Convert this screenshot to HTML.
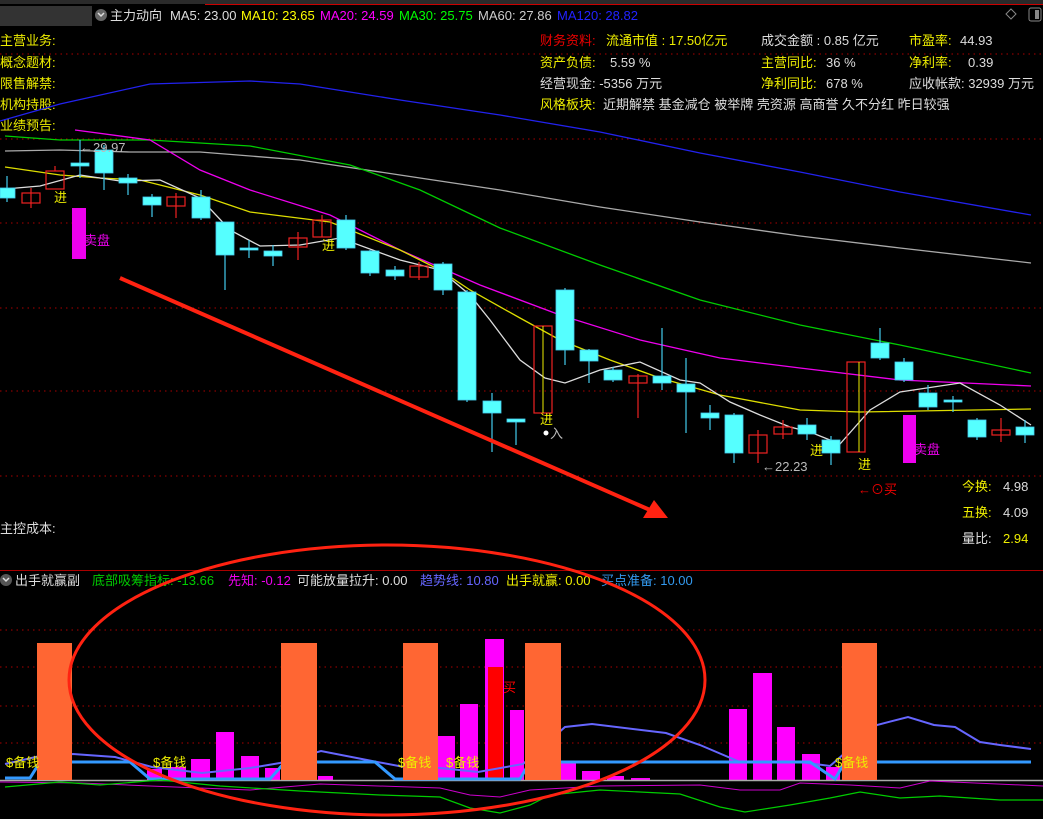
<!DOCTYPE html>
<html><head><meta charset="utf-8"><style>
body{margin:0;background:#000;width:1043px;height:819px;overflow:hidden;font-family:"Liberation Sans","Noto Sans CJK SC",sans-serif}
svg{position:absolute;left:0;top:0}
text{font-family:"Liberation Sans","Noto Sans CJK SC",sans-serif;font-size:13px}
</style></head><body>
<svg width="1043" height="819" viewBox="0 0 1043 819">
<rect width="1043" height="819" fill="#000"/>
<rect width="1043" height="4" fill="#2a2a2a"/>
<line x1="205" y1="4.5" x2="1043" y2="4.5" stroke="#c00" stroke-width="1"/>
<rect x="0" y="6" width="92" height="20" fill="#333"/>
<circle cx="101" cy="15" r="6" fill="#666"/>
<path d="M98 13l3 3 3-3" stroke="#ddd" fill="none" stroke-width="1.5"/>
<text x="110" y="20" fill="#ddd">主力动向</text>
<text x="170" y="20" fill="#ddd">MA5: 23.00</text>
<text x="241" y="20" fill="#ff0">MA10: 23.65</text>
<text x="320" y="20" fill="#f0f">MA20: 24.59</text>
<text x="399" y="20" fill="#0f0">MA30: 25.75</text>
<text x="478" y="20" fill="#ccc">MA60: 27.86</text>
<text x="557" y="20" fill="#22f">MA120: 28.82</text>
<path d="M1011 9l5 5-5 5-5-5z" stroke="#888" fill="none"/>
<rect x="1029" y="8" width="12" height="13" rx="2" stroke="#888" fill="none"/>
<rect x="1035" y="10" width="4" height="9" fill="#888"/>
<!-- grid -->
<g stroke="#a00" stroke-dasharray="1.5,4" stroke-width="1">
<line x1="0" y1="54" x2="1043" y2="54"/><line x1="0" y1="139" x2="1043" y2="139"/><line x1="0" y1="223" x2="1043" y2="223"/><line x1="0" y1="308" x2="1043" y2="308"/><line x1="0" y1="391" x2="1043" y2="391"/><line x1="0" y1="476" x2="1043" y2="476"/>
<line x1="0" y1="630" x2="1043" y2="630"/><line x1="0" y1="667" x2="1043" y2="667"/><line x1="0" y1="706" x2="1043" y2="706"/><line x1="0" y1="743" x2="1043" y2="743"/>
</g>
<!-- labels -->
<g fill="#ee0">
<text x="0" y="45">主营业务:</text><text x="0" y="67">概念题材:</text><text x="0" y="88">限售解禁:</text><text x="0" y="109">机构持股:</text><text x="0" y="130">业绩预告:</text>
<text x="0" y="533" fill="#ddd">主控成本:</text>
</g>
<text x="540" y="45" fill="#e00">财务资料:</text><text x="606" y="45" fill="#ee0">流通市值 : 17.50亿元</text>
<text x="761" y="45" fill="#ddd">成交金额 : 0.85  亿元</text>
<text x="909" y="45" fill="#ee0">市盈率:</text><text x="960" y="45" fill="#ddd">44.93</text>
<text x="540" y="67" fill="#ee0">资产负债:</text><text x="610" y="67" fill="#ddd">  5.59 %</text>
<text x="761" y="67" fill="#ee0">主营同比:</text><text x="826" y="67" fill="#ddd">36 %</text>
<text x="909" y="67" fill="#ee0">净利率:</text><text x="968" y="67" fill="#ddd">0.39</text>
<text x="540" y="88" fill="#ddd">经营现金: -5356 万元</text>
<text x="761" y="88" fill="#ee0">净利同比:</text><text x="826" y="88" fill="#ddd">678 %</text>
<text x="909" y="88" fill="#ddd">应收帐款: 32939 万元</text>
<text x="540" y="109" fill="#ee0">风格板块:</text><text x="603" y="109" fill="#ddd">近期解禁 基金减仓 被举牌 壳资源 高商誉 久不分红 昨日较强</text>
<text x="962" y="491" fill="#ee0">今换:</text><text x="1003" y="491" fill="#ddd">4.98</text>
<text x="962" y="517" fill="#ee0">五换:</text><text x="1003" y="517" fill="#ddd">4.09</text>
<text x="962" y="543" fill="#ddd">量比:</text><text x="1003" y="543" fill="#ee0">2.94</text>
<!-- MAs -->
<g fill="none" stroke-width="1.3">
<polyline stroke="#22e" points="0,121 60,104 150,84 250,81 300,84 400,100 500,115 600,132 700,153 800,172 900,192 1031,215"/>
<polyline stroke="#aaa" points="5,151 60,150 130,152 200,152 300,160 400,175 500,190 600,207 700,222 800,236 900,248 1031,263"/>
<polyline stroke="#0c0" points="5,136 60,140 150,140 250,146 350,165 420,190 500,228 600,265 700,300 800,325 900,345 1031,373"/>
<polyline stroke="#e0e" points="75,130 150,140 200,170 250,190 330,215 400,250 480,285 560,315 640,340 720,358 800,368 900,380 1031,386"/>
<polyline stroke="#dd0" points="5,167 60,175 100,178 140,180 200,195 250,212 330,222 400,250 440,270 470,290 520,318 560,340 610,360 660,378 720,395 800,410 860,412 1031,409"/>
<polyline stroke="#ddd" points="5,189 40,186 80,175 120,181 160,180 200,198 230,230 260,246 300,245 340,238 400,260 440,270 470,295 490,320 520,360 545,378 565,383 600,370 640,362 680,380 700,383 730,402 760,415 790,427 810,432 840,444 870,410 900,392 960,383 1000,405 1031,425"/>
</g>
<!-- magenta sell bars -->
<rect x="72" y="208" width="14" height="51" fill="#e0e"/>
<rect x="903" y="415" width="13" height="48" fill="#e0e"/>
<text x="84" y="245" fill="#e0e">卖盘</text>
<text x="914" y="454" fill="#e0e">卖盘</text>
<!-- candles -->
<g stroke="#4ce" stroke-width="1.2">
<line x1="7" y1="176" x2="7" y2="202"/><line x1="80" y1="140" x2="80" y2="178"/><line x1="104" y1="145" x2="104" y2="190"/><line x1="128" y1="174" x2="128" y2="195"/><line x1="152" y1="194" x2="152" y2="217"/><line x1="201" y1="190" x2="201" y2="220"/><line x1="225" y1="222" x2="225" y2="290"/><line x1="249" y1="240" x2="249" y2="258"/><line x1="273" y1="245" x2="273" y2="266"/><line x1="346" y1="215" x2="346" y2="250"/><line x1="370" y1="250" x2="370" y2="276"/><line x1="395" y1="266" x2="395" y2="280"/><line x1="443" y1="262" x2="443" y2="295"/><line x1="467" y1="290" x2="467" y2="402"/><line x1="492" y1="393" x2="492" y2="452"/><line x1="516" y1="420" x2="516" y2="445"/><line x1="565" y1="288" x2="565" y2="365"/><line x1="589" y1="349" x2="589" y2="383"/><line x1="613" y1="367" x2="613" y2="382"/><line x1="662" y1="328" x2="662" y2="390"/><line x1="686" y1="358" x2="686" y2="433"/><line x1="710" y1="405" x2="710" y2="430"/><line x1="734" y1="413" x2="734" y2="463"/><line x1="807" y1="418" x2="807" y2="440"/><line x1="831" y1="436" x2="831" y2="465"/><line x1="880" y1="328" x2="880" y2="360"/><line x1="904" y1="358" x2="904" y2="382"/><line x1="928" y1="385" x2="928" y2="410"/><line x1="953" y1="396" x2="953" y2="412"/><line x1="977" y1="418" x2="977" y2="440"/><line x1="1025" y1="420" x2="1025" y2="443"/>
</g>
<g fill="#5ff" stroke="#4ce" stroke-width="0.8">
<rect x="0" y="188" width="15" height="10"/><rect x="71" y="163" width="18" height="3"/><rect x="95" y="150" width="18" height="23"/><rect x="119" y="178" width="18" height="5"/><rect x="143" y="197" width="18" height="8"/><rect x="192" y="197" width="18" height="21"/><rect x="216" y="222" width="18" height="33"/><rect x="240" y="248" width="18" height="2"/><rect x="264" y="251" width="18" height="5"/><rect x="337" y="220" width="18" height="28"/><rect x="361" y="251" width="18" height="22"/><rect x="386" y="270" width="18" height="6"/><rect x="434" y="264" width="18" height="26"/><rect x="458" y="292" width="18" height="108"/><rect x="483" y="401" width="18" height="12"/><rect x="507" y="419" width="18" height="3"/><rect x="556" y="290" width="18" height="60"/><rect x="580" y="350" width="18" height="11"/><rect x="604" y="370" width="18" height="10"/><rect x="653" y="376" width="18" height="7"/><rect x="677" y="384" width="18" height="8"/><rect x="701" y="413" width="18" height="5"/><rect x="725" y="415" width="18" height="38"/><rect x="798" y="425" width="18" height="9"/><rect x="822" y="440" width="18" height="13"/><rect x="871" y="343" width="18" height="15"/><rect x="895" y="362" width="18" height="18"/><rect x="919" y="393" width="18" height="14"/><rect x="944" y="400" width="18" height="2"/><rect x="968" y="420" width="18" height="17"/><rect x="1016" y="427" width="18" height="8"/>
</g>
<g stroke="#e22" fill="none" stroke-width="1.2">
<line x1="31" y1="188" x2="31" y2="208"/><rect x="22" y="193" width="18" height="10"/>
<line x1="55" y1="166" x2="55" y2="171"/><rect x="46" y="171" width="18" height="18"/>
<line x1="176" y1="193" x2="176" y2="218"/><rect x="167" y="197" width="18" height="9"/>
<line x1="298" y1="232" x2="298" y2="260"/><rect x="289" y="238" width="18" height="9"/>
<line x1="322" y1="215" x2="322" y2="237"/><rect x="313" y="220" width="18" height="17"/>
<line x1="419" y1="262" x2="419" y2="280"/><rect x="410" y="266" width="18" height="11"/>
<rect x="534" y="326" width="18" height="87"/>
<line x1="638" y1="374" x2="638" y2="418"/><rect x="629" y="376" width="18" height="7"/>
<line x1="758" y1="430" x2="758" y2="463"/><rect x="749" y="435" width="18" height="18"/>
<line x1="783" y1="420" x2="783" y2="439"/><rect x="774" y="427" width="18" height="7"/>
<rect x="847" y="362" width="18" height="90"/>
<line x1="1001" y1="418" x2="1001" y2="442"/><rect x="992" y="430" width="18" height="5"/>
</g>
<line x1="543" y1="326" x2="543" y2="413" stroke="#ee0"/>
<line x1="859" y1="362" x2="859" y2="452" stroke="#ee0"/>
<g fill="#ee0"><text x="54" y="202">进</text><text x="322" y="250">进</text><text x="540" y="424">进</text><text x="810" y="455">进</text><text x="858" y="469">进</text></g>
<text x="80" y="152" fill="#bbb">←29.97</text>
<text x="762" y="471" fill="#bbb">←22.23</text>
<circle cx="546" cy="433" r="2.5" fill="#fff"/><text x="550" y="438" fill="#bbb">入</text>
<text x="858" y="494" fill="#e00">←⊙买</text>
<!-- red arrow -->
<line x1="120" y1="278" x2="650" y2="510" stroke="#f21" stroke-width="4"/>
<path d="M668 518 L643 518 L654 500 Z" fill="#f21"/>
<!-- lower pane -->
<line x1="0" y1="570.5" x2="1043" y2="570.5" stroke="#a00"/>
<circle cx="6" cy="580" r="6" fill="#555"/><path d="M3 578l3 3 3-3" stroke="#ddd" fill="none" stroke-width="1.5"/>
<text x="15" y="585" fill="#ddd">出手就赢副</text>
<text x="92" y="585" fill="#0c0">底部吸筹指标: -13.66</text>
<text x="228" y="585" fill="#e0e">先知: -0.12</text>
<text x="297" y="585" fill="#ddd">可能放量拉升: 0.00</text>
<text x="420" y="585" fill="#66f">趋势线: 10.80</text>
<text x="506" y="585" fill="#ee0">出手就赢: 0.00</text>
<text x="601" y="585" fill="#39e">买点准备: 10.00</text>
<g fill="#f0f">
<rect x="147" y="769" width="15" height="11"/><rect x="168" y="767" width="18" height="13"/><rect x="191" y="759" width="19" height="21"/><rect x="216" y="732" width="18" height="48"/><rect x="241" y="756" width="18" height="24"/><rect x="265" y="768" width="15" height="12"/><rect x="318" y="776" width="15" height="4"/>
<rect x="438" y="736" width="17" height="44"/><rect x="460" y="704" width="18" height="76"/><rect x="485" y="639" width="19" height="141"/><rect x="510" y="710" width="14" height="70"/>
<rect x="561" y="763" width="15" height="17"/><rect x="582" y="771" width="18" height="9"/><rect x="607" y="776" width="17" height="4"/><rect x="631" y="778" width="19" height="2"/>
<rect x="729" y="709" width="18" height="71"/><rect x="753" y="673" width="19" height="107"/><rect x="777" y="727" width="18" height="53"/><rect x="802" y="754" width="18" height="26"/><rect x="826" y="767" width="14" height="13"/>
</g>
<rect x="488" y="667" width="15" height="113" fill="#f00"/>
<text x="503" y="692" fill="#f00">买</text>
<line x1="0" y1="780.5" x2="1043" y2="780.5" stroke="#aaa" stroke-width="1.5"/>
<polyline fill="none" stroke="#66f" stroke-width="2" points="5,764 40,756 73,754 115,757 152,767 202,773 250,768 280,763 321,751 367,760 404,767 440,768 478,772 523,764 565,727 592,724 666,733 700,745 740,762 800,762 830,766 877,725 908,717 934,725 955,727 980,742 1000,745 1031,749"/>
<polyline fill="none" stroke="#39f" stroke-width="3" points="5,778 30,778 40,762 130,762 150,779 270,779 285,762 375,762 395,779 520,779 530,762 680,762 810,762 835,779 845,762 1031,762"/>
<polyline fill="none" stroke="#c0c" stroke-width="1" points="0,782 80,783 150,786 250,790 320,784 440,788 470,795 500,797 530,790 600,786 700,785 740,790 780,790 800,783 850,785 900,788 930,781 1043,786"/>
<polyline fill="none" stroke="#0c0" stroke-width="1.2" points="5,787 60,782 100,785 160,780 220,786 300,791 380,795 440,797 470,808 500,813 530,805 550,795 600,790 680,794 720,807 745,812 790,805 830,798 860,792 900,798 940,796 1000,800 1043,800"/>
<g fill="#ff6633">
<rect x="37" y="643" width="35" height="137"/><rect x="281" y="643" width="36" height="137"/><rect x="403" y="643" width="35" height="137"/><rect x="525" y="643" width="36" height="137"/><rect x="842" y="643" width="35" height="137"/>
</g>
<g fill="#ee0"><text x="6" y="767">$备钱</text><text x="153" y="767">$备钱</text><text x="398" y="767">$备钱</text><text x="446" y="767">$备钱</text><text x="835" y="767">$备钱</text></g>
<ellipse cx="387" cy="680" rx="318" ry="135" fill="none" stroke="#f21" stroke-width="3"/>
</svg>
</body></html>
